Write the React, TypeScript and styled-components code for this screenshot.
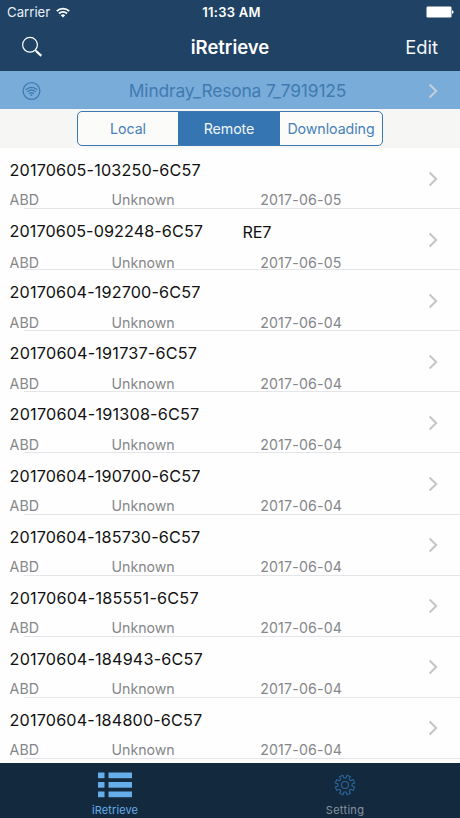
import React from 'react';
import styled, { createGlobalStyle } from 'styled-components';

const GlobalStyle = createGlobalStyle`
  * { box-sizing: border-box; }
  body { margin: 0; background: #fff; font-family: Inter, "Liberation Sans", sans-serif; }
`;

const Screen = styled.div`
  width: 460px;
  height: 818px;
  display: flex;
  flex-direction: column;
  overflow: hidden;
  background: #fefefe;
  white-space: nowrap;
`;

const Header = styled.header`
  height: 71px;
  flex: none;
  background: #1f4265;
  color: #fff;
`;

const StatusBar = styled.div`
  height: 24px;
  display: grid;
  grid-template-columns: 1fr auto 1fr;
  align-items: center;
  padding: 0 6px 0 7px;
`;

const Carrier = styled.div`
  display: flex;
  align-items: center;
  gap: 6px;
  font-size: 13.2px;
  line-height: 24px;
  color: #e9f0f6;
`;

const Clock = styled.div`
  padding-left: 2px;
  font-size: 13px;
  font-weight: 600;
  line-height: 24px;
  letter-spacing: 0.25px;
`;

const BatterySlot = styled.div`
  display: flex;
  justify-content: flex-end;
`;

const NavBar = styled.div`
  height: 46px;
  display: grid;
  grid-template-columns: 1fr auto 1fr;
  align-items: center;
  padding: 0 22px 2px 21px;
`;

const Title = styled.h1`
  margin: 0;
  padding-left: 1px;
  font-size: 18.5px;
  font-weight: 600;
  line-height: 46px;
`;

const EditButton = styled.button`
  justify-self: end;
  padding: 0;
  border: 0;
  background: none;
  color: #f4f8fb;
  font: 400 18.4px/46px Inter, sans-serif;
`;

const DeviceBar = styled.div`
  height: 38px;
  flex: none;
  display: grid;
  grid-template-columns: 40px 1fr 10px;
  align-items: center;
  padding: 0 22px 0 21px;
  background: #7aacd9;
  color: #3f7bb3;
`;

const DeviceName = styled.div`
  padding-right: 14px;
  text-align: center;
  font-size: 17.4px;
  line-height: 39px;
  letter-spacing: -0.15px;
`;

const SegmentBar = styled.div`
  height: 39px;
  flex: none;
  display: flex;
  justify-content: center;
  padding-top: 2px;
  background: #f6f6f5;
`;

const Segments = styled.div`
  width: 306px;
  height: 35px;
  display: grid;
  grid-template-columns: 100px 102px 1fr;
  overflow: hidden;
  border: 1px solid #3a78b4;
  border-radius: 5px;
  background: #fbfbfa;
`;

const Segment = styled.button<{ $active?: boolean }>`
  padding: 0;
  border: 0;
  background: ${(p) => (p.$active ? '#3575b1' : 'transparent')};
  color: ${(p) => (p.$active ? '#f1f6fb' : '#4580b8')};
  font: 400 14.2px/33px Inter, sans-serif;
  letter-spacing: -0.05px;
`;

const List = styled.main`
  flex: 1;
  min-height: 0;
  overflow: hidden;
`;

const Row = styled.article`
  height: 61.1px;
  display: grid;
  grid-template-columns: 1fr 10px;
  align-items: center;
  padding: 0 22px 0 9.6px;
  background: linear-gradient(#e3e5e8, #e3e5e8) 24px 100% / 436px 1px no-repeat;
`;

const RowBody = styled.div`
  height: 61px;
  padding-top: 10px;
`;

const RowTop = styled.div`
  display: grid;
  grid-template-columns: 233px 1fr;
  font-size: 16.2px;
  line-height: 24px;
  color: #111;
`;

const RecordId = styled.span<{ $tracking: number }>`
  letter-spacing: ${(p) => p.$tracking}px;
`;

const Tag = styled.span`
  padding-top: 1px;
  letter-spacing: -0.2px;
`;

const RowDetails = styled.div`
  display: grid;
  grid-template-columns: 102px 148.6px 1fr;
  padding-top: 8.4px;
  font-size: 14.2px;
  line-height: 20px;
  color: #85868a;
`;

const Detail = styled.span<{ $tracking?: number }>`
  letter-spacing: ${(p) => p.$tracking ?? 0}px;
`;

const TabBar = styled.nav`
  height: 55px;
  flex: none;
  display: grid;
  grid-template-columns: 1fr 1fr;
  background: #13293d;
`;

const Tab = styled.button<{ $active?: boolean }>`
  display: flex;
  flex-direction: column;
  align-items: center;
  padding: 6px 0 0;
  border: 0;
  background: none;
  color: ${(p) => (p.$active ? '#66aeea' : '#8792a0')};
  font: 400 11px/14px Inter, sans-serif;
  letter-spacing: ${(p) => (p.$active ? 0.1 : 0.3)}px;
`;

const TabIcon = styled.span`
  height: 34px;
  display: flex;
  align-items: center;
  padding-bottom: 2px;
`;

const WifiIcon = () => (
  <svg width="14" height="11" viewBox="0 0 14 11" fill="none" stroke="#fff" strokeWidth="1.8">
    <path d="M.8 4.1a8.8 8.8 0 0 1 12.4 0M3 6.5a5.7 5.7 0 0 1 8 0" />
    <path d="M7 10.4 4.8 8.2a3.2 3.2 0 0 1 4.4 0z" fill="#fff" stroke="none" />
  </svg>
);

const BatteryIcon = () => (
  <svg width="28" height="12" viewBox="0 0 28 12" fill="#fff">
    <rect x="0.5" y="0.5" width="25" height="11" rx="1.3" />
    <path d="M26 4.2c2 .2 2 3.4 0 3.6z" />
  </svg>
);

const SearchIcon = () => (
  <svg width="22" height="22" viewBox="0 0 22 22" fill="none" stroke="#fff">
    <circle cx="9" cy="8.8" r="7.4" strokeWidth="1.2" />
    <path d="m14.2 14 1.2 1.2" strokeWidth="1.2" />
    <path d="m15 15 5.3 4.8" strokeWidth="2.3" />
  </svg>
);

const SignalIcon = () => (
  <svg width="21" height="20" viewBox="-.5 0 21 20" fill="none" stroke="#3f7bb3" strokeWidth="1.3" strokeLinecap="round">
    <circle cx="10" cy="10" r="8.4" />
    <path d="M4.6 8.5q5.4-4.4 10.8 0M6.3 10.5q3.7-3 7.4 0M8 12.4q2-1.5 4 0" />
    <circle cx="10" cy="14" r="1" fill="#3f7bb3" stroke="none" />
  </svg>
);

const Chevron = ({ color = '#c5c5c8' }: { color?: string }) => (
  <svg width="10" height="16" viewBox="0 0 10 16" fill="none" stroke={color} strokeWidth="2">
    <path d="m1.6 1.5 6.6 6.5-6.6 6.5" />
  </svg>
);

const ListIcon = () => (
  <svg width="34" height="26" viewBox="0 0 34 26" fill="#66aeea">
    {[0, 9.5, 19].map((y) => (
      <React.Fragment key={y}>
        <rect y={y + 0.5} width="6.5" height="5.7" />
        <rect x="10.5" y={y + 0.5} width="23.5" height="5.7" />
      </React.Fragment>
    ))}
  </svg>
);

const gearPoints = Array.from({ length: 8 }, (_, i) =>
  [
    [-14, 7.1],
    [-10.5, 9.9],
    [10.5, 9.9],
    [14, 7.1],
  ]
    .map(([offset, radius]) => {
      const angle = ((i * 45 + 22.5 + offset) * Math.PI) / 180;
      return `${(11 + Math.cos(angle) * radius).toFixed(2)},${(11 + Math.sin(angle) * radius).toFixed(2)}`;
    })
    .join(' '),
).join(' ');

const GearIcon = () => (
  <svg width="22" height="22" viewBox="0 0 22 22" fill="none" stroke="#2c659a" strokeWidth="1.1" strokeLinejoin="round">
    <polygon points={gearPoints} />
    <circle cx="11" cy="11" r="3.5" />
  </svg>
);

type RecordItem = { id: string; date: string; tag?: string; tracking: number };

const records: RecordItem[] = [
  { id: '20170605-103250-6C57', date: '2017-06-05', tracking: 0.14 },
  { id: '20170605-092248-6C57', date: '2017-06-05', tag: 'RE7', tracking: 0.08 },
  { id: '20170604-192700-6C57', date: '2017-06-04', tracking: 0.14 },
  { id: '20170604-191737-6C57', date: '2017-06-04', tracking: 0.2 },
  { id: '20170604-191308-6C57', date: '2017-06-04', tracking: 0.21 },
  { id: '20170604-190700-6C57', date: '2017-06-04', tracking: 0.14 },
  { id: '20170604-185730-6C57', date: '2017-06-04', tracking: 0.14 },
  { id: '20170604-185551-6C57', date: '2017-06-04', tracking: 0.21 },
  { id: '20170604-184943-6C57', date: '2017-06-04', tracking: 0.17 },
  { id: '20170604-184800-6C57', date: '2017-06-04', tracking: 0.15 },
];

export default function App() {
  return (
    <Screen>
      <GlobalStyle />
      <Header>
        <StatusBar>
          <Carrier>Carrier <WifiIcon /></Carrier>
          <Clock>11:33 AM</Clock>
          <BatterySlot><BatteryIcon /></BatterySlot>
        </StatusBar>
        <NavBar>
          <SearchIcon />
          <Title>iRetrieve</Title>
          <EditButton>Edit</EditButton>
        </NavBar>
      </Header>
      <DeviceBar>
        <SignalIcon />
        <DeviceName>Mindray_Resona 7_7919125</DeviceName>
        <Chevron color="#c3cfdb" />
      </DeviceBar>
      <SegmentBar>
        <Segments>
          <Segment>Local</Segment>
          <Segment $active>Remote</Segment>
          <Segment>Downloading</Segment>
        </Segments>
      </SegmentBar>
      <List>
        {records.map((r) => (
          <Row key={r.id}>
            <RowBody>
              <RowTop>
                <RecordId $tracking={r.tracking}>{r.id}</RecordId>
                {r.tag && <Tag>{r.tag}</Tag>}
              </RowTop>
              <RowDetails>
                <Detail>ABD</Detail>
                <Detail $tracking={-0.05}>Unknown</Detail>
                <Detail $tracking={0.16}>{r.date}</Detail>
              </RowDetails>
            </RowBody>
            <Chevron />
          </Row>
        ))}
      </List>
      <TabBar>
        <Tab $active>
          <TabIcon><ListIcon /></TabIcon>
          iRetrieve
        </Tab>
        <Tab>
          <TabIcon><GearIcon /></TabIcon>
          Setting
        </Tab>
      </TabBar>
    </Screen>
  );
}
